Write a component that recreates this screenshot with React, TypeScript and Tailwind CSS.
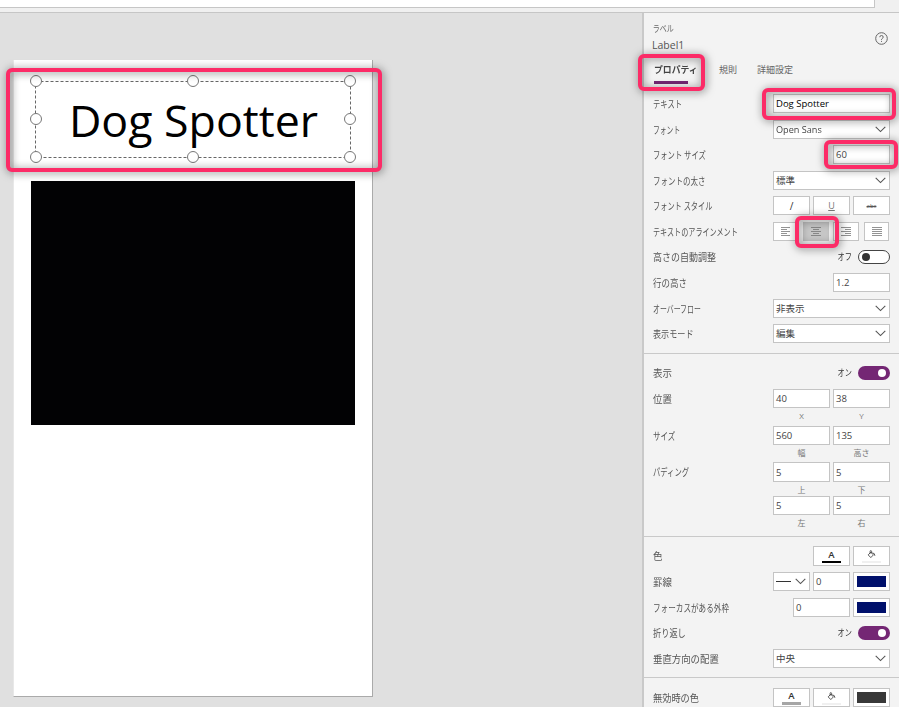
import React from "react";

const JP = "font-['Open_Sans','Noto_Sans_CJK_JP',sans-serif]";
const BOX = "box-border border border-[#c4c4c4] bg-white";

function Label({ text, scale }: { text: string; scale: string }) {
  return (
    <span className={`block h-[19px] origin-left whitespace-nowrap pt-px text-[10px] leading-[19px] text-[#555] ${scale}`}>
      {text}
    </span>
  );
}

function Row({ label, scale, h, children }: { label: string; scale: string; h: string; children: React.ReactNode }) {
  return (
    <div className={`flex items-start justify-between pr-[9px] pl-[9px] ${h}`}>
      <div className="w-0"><Label text={label} scale={scale} /></div>
      <div className="flex items-start">{children}</div>
    </div>
  );
}

function Chevron() {
  return (
    <svg className="h-[7px] w-[11px] shrink-0" viewBox="0 0 11 7" fill="none" stroke="#555" strokeWidth="1.1">
      <path d="M0.7 0.9 L5.5 5.6 L10.3 0.9" />
    </svg>
  );
}

function Select({ value, scale = "" }: { value: string; scale?: string }) {
  return (
    <div className={`${BOX} flex h-[19px] w-[117px] items-center justify-between pr-[3px] pl-[2px]`}>
      <span className={`origin-left text-[9.5px] leading-[17px] text-[#444] ${scale}`}>{value}</span>
      <Chevron />
    </div>
  );
}

function Input({ value, w = "w-[57px]", h = "h-[19px]", color = "text-[#444]" }: { value: string; w?: string; h?: string; color?: string }) {
  return (
    <div className={`${BOX} ${w} ${h} ${color} flex items-center whitespace-nowrap pl-[2px] text-[9.5px] leading-[17px]`}>{value}</div>
  );
}

function Pair({ a, b, la, lb, h }: { a: string; b: string; la: string; lb: string; h?: string }) {
  return (
    <div className="flex gap-[3px]">
      {[[a, la], [b, lb]].map(([v, l], i) => (
        <div key={i} className="flex flex-col items-center">
          <Input value={v} h={h} />
          <span className="mt-px h-3 text-[8px] leading-[13px] text-[#777]">{l}</span>
        </div>
      ))}
    </div>
  );
}

function Toggle({ on }: { on: boolean }) {
  return (
    <div className="mt-[3px] flex h-[14px] items-center">
      <span className="mr-[6px] origin-right scale-x-[.8] text-[9px] leading-[14px] text-[#333]">{on ? "オン" : "オフ"}</span>
      {on ? (
        <div className="flex h-[14px] w-8 items-center justify-end rounded-full bg-[#742774] pr-[4px]">
          <div className="size-[8px] rounded-full bg-white" />
        </div>
      ) : (
        <div className="flex h-[14px] w-8 items-center rounded-full border border-[#444] bg-white pl-[3px]">
          <div className="size-[8px] rounded-full bg-[#333]" />
        </div>
      )}
    </div>
  );
}

function AlignIcon({ kind }: { kind: "left" | "center" | "right" | "justify" }) {
  const d = {
    left: "M0 .5H9M0 2.5H6M0 4.5H9M0 6.5H6M0 8.5H9",
    center: "M0 .5H10M2 2.5H8M0 4.5H10M2 6.5H8M0 8.5H10",
    right: "M0 .5H10M4 2.5H10M0 4.5H10M4 6.5H10M0 8.5H10",
    justify: "M0 .5H10M0 2.5H10M0 4.5H10M0 6.5H10M0 8.5H10",
  }[kind];
  return (
    <svg className="mb-px h-[9px] w-[10px]" viewBox="0 0 10 9" stroke="#777" strokeWidth=".8">
      <path d={d} />
    </svg>
  );
}

function Button({ children, w = "w-[37px]", h = "h-[19px]", bg = "bg-white" }: { children: React.ReactNode; w?: string; h?: string; bg?: string }) {
  return <div className={`box-border flex items-center justify-center border border-[#c4c4c4] ${bg} ${w} ${h}`}>{children}</div>;
}

function FontColor({ bar, h }: { bar: string; h?: string }) {
  return (
    <Button h={h}>
      <div className="flex flex-col items-center">
        <span className="h-[11px] text-[9.5px] leading-[10px] font-semibold text-[#333]">A</span>
        <div className={`w-[19px] ${bar}`} />
      </div>
    </Button>
  );
}

function Fill({ h }: { h?: string }) {
  return (
    <Button h={h}>
      <div className="flex flex-col items-center">
        <svg className="mt-px h-[9px] w-[9px]" viewBox="0 0 9 9" fill="none" stroke="#333" strokeWidth=".8">
          <path d="M3.8 2.2 L1.2 4.9 L3.8 7.6 L6.4 4.9 Z M3.1 3.7V1.4Q3.1 .6 3.8 .6T4.6 1.4V3.2 M5.4 2.9Q7.9 3 7.9 5.8" />
        </svg>
        <div className="mt-[2px] h-[2px] w-[19px] bg-[#f0f0f0]" />
      </div>
    </Button>
  );
}

function Swatch({ color }: { color: string }) {
  return <Button><div className={`h-[11px] w-[29px] ${color}`} /></Button>;
}

function Highlight({ place }: { place: string }) {
  return (
    <div className={`pointer-events-none absolute rounded-[6px] border-4 border-[#fc2b67] drop-shadow-[1px_1px_4px_rgba(0,0,0,0.55)] ${place}`} />
  );
}

const HANDLES = [
  "-left-[5px] -top-[6px]", "left-[152px] -top-[6px]", "left-[309px] -top-[6px]",
  "-left-[5px] top-[32px]", "left-[309px] top-[32px]",
  "-left-[5px] top-[70px]", "left-[152px] top-[70px]", "left-[309px] top-[70px]",
];

export default function App() {
  return (
    <div className={`relative flex h-[707px] w-[899px] flex-col overflow-hidden bg-[#f0f0f0] ${JP}`}>
      <div className="h-[8px] w-[875px] shrink-0 border-r border-b border-[#c6c6c6] bg-white" />
      <div className="h-[5px] shrink-0 border-b border-[#c6c6c6]" />
      <div className="flex min-h-0 flex-1">
        <main className="w-[642px] shrink-0 bg-[#e0e0e0] pt-[47px] pl-[13px]">
          <div className="flex h-[637px] w-[360px] flex-col border-r border-b border-l border-r-[#aaa] border-b-[#aaa] border-l-[#e8e8e8] bg-white">
            <div className="relative mt-[21px] ml-[21px] flex h-[77px] w-[316px] items-center justify-center">
              <svg className="absolute inset-0 h-[77px] w-[316px]" fill="none" stroke="#666" strokeDasharray="3 2">
                <rect x=".5" y=".5" width="315" height="76" />
              </svg>
              <span className="relative pl-px text-[44.7px] leading-[54px] whitespace-nowrap text-black">Dog Spotter</span>
              {HANDLES.map((p) => (
                <div key={p} className={`absolute size-[12px] rounded-full border border-[#777] bg-white ${p}`} />
              ))}
            </div>
            <div className="mt-[23px] ml-[17px] h-[244px] w-[324px] bg-[#020204]" />
          </div>
        </main>
        <aside className="w-[257px] shrink-0 border-l-2 border-[#c9c9c9] bg-[#f3f3f3]">
          <header className="flex h-[47px] items-start justify-between pr-[11px] pl-[8px]">
            <div className="pt-[9px]">
              <div className="h-3 origin-left scale-x-[.78] pl-px text-[9px] leading-[13px] text-[#666]">ラベル</div>
              <div className="mt-[3px] h-4 text-[10.5px] leading-4 text-[#555]">Label1</div>
            </div>
            <svg className="mt-[19px] size-[13px]" viewBox="0 0 13 13" fill="none" stroke="#666">
              <circle cx="6.5" cy="6.5" r="5.8" />
              <path d="M4.8 5.2Q4.8 3.5 6.5 3.5T8.2 5.1Q8.2 6 7.2 6.6T6.5 8M6.5 8.9V9.9" />
            </svg>
          </header>
          <nav className="flex h-[34px] pl-[10px] text-[9px] leading-[18px] text-[#666]">
            <div className="w-[65px]">
              <div className="mt-px w-max origin-left scale-x-[.98] font-bold text-[#444]">プロパティ</div>
              <div className="mt-[2px] h-[3px] w-[34px] bg-[#742774]" />
            </div>
            <div className="mt-px w-[38px]">規則</div>
            <div className="mt-px">詳細設定</div>
          </nav>
          <section className="h-[259px]">
            <Row label="テキスト" scale="scale-x-[.73]" h="h-[26px]"><Input value="Dog Spotter" w="w-[117px]" color="text-black" /></Row>
            <Row label="フォント" scale="scale-x-[.68]" h="h-[25px]"><Select value="Open Sans" scale="scale-x-[.96]" /></Row>
            <Row label="フォント サイズ" scale="scale-x-[.73]" h="h-[26px]"><Input value="60" /></Row>
            <Row label="フォントの太さ" scale="scale-x-[.75]" h="h-[25px]"><Select value="標準" /></Row>
            <Row label="フォント スタイル" scale="scale-x-[.72]" h="h-[26px]">
              <div className="flex gap-[3px]">
                <Button><span className="text-[10px] leading-3 text-[#333]">/</span></Button>
                <Button><span className="text-[9px] leading-3 text-[#777] underline">U</span></Button>
                <Button><span className="text-[6px] leading-3 text-[#555] line-through">abc</span></Button>
              </div>
            </Row>
            <Row label="テキストのアラインメント" scale="scale-x-[.71]" h="h-[25px]">
              <div className="flex pr-px">
                <Button w="w-[25px]"><AlignIcon kind="left" /></Button>
                <div className="ml-[5px]"><Button w="w-[26px]" bg="bg-[#c6c6c6]"><AlignIcon kind="center" /></Button></div>
                <div className="ml-[4px]"><Button w="w-[26px]"><AlignIcon kind="right" /></Button></div>
                <div className="ml-[5px]"><Button w="w-[25px]"><AlignIcon kind="justify" /></Button></div>
              </div>
            </Row>
            <Row label="高さの自動調整" scale="scale-x-[.9]" h="h-[26px]"><Toggle on={false} /></Row>
            <Row label="行の高さ" scale="scale-x-[.85]" h="h-[26px]"><Input value="1.2" /></Row>
            <Row label="オーバーフロー" scale="scale-x-[.69]" h="h-[25px]"><Select value="非表示" /></Row>
            <Row label="表示モード" scale="scale-x-[.81]" h="h-[29px]"><Select value="編集" /></Row>
          </section>
          <section className="h-[183px] border-t border-[#c9c9c9] pt-[9px]">
            <Row label="表示" scale="scale-x-[.95]" h="h-[26px]"><Toggle on /></Row>
            <Row label="位置" scale="scale-x-[.95]" h="h-[37px]"><Pair a="40" b="38" la="X" lb="Y" /></Row>
            <Row label="サイズ" scale="scale-x-[.75]" h="h-[36px]"><Pair a="560" b="135" la="幅" lb="高さ" /></Row>
            <Row label="パディング" scale="scale-x-[.73]" h="h-[34px]"><Pair a="5" b="5" la="上" lb="下" h="h-[20px]" /></Row>
            <div className="flex justify-end pr-[9px]"><Pair a="5" b="5" la="左" lb="右" /></div>
          </section>
          <section className="h-[141px] border-t border-[#c9c9c9] pt-[9px]">
            <Row label="色" scale="scale-x-[.95]" h="h-[26px]">
              <div className="flex gap-[3px]"><FontColor bar="h-[2px] bg-black" h="h-[20px]" /><Fill h="h-[20px]" /></div>
            </Row>
            <Row label="罫線" scale="scale-x-[.95]" h="h-[26px]">
              <div className="flex gap-[3px]">
                <div className={`${BOX} flex h-[19px] w-[37px] items-center justify-between pr-[3px] pl-[2px]`}>
                  <div className="h-px w-[15px] bg-[#333]" /><Chevron />
                </div>
                <Input value="0" w="w-[37px]" /><Swatch color="bg-[#00106b]" />
              </div>
            </Row>
            <Row label="フォーカスがある外枠" scale="scale-x-[.76]" h="h-[25px]">
              <div className="flex gap-[3px]"><Input value="0" /><Swatch color="bg-[#00106b]" /></div>
            </Row>
            <Row label="折り返し" scale="scale-x-[.82]" h="h-[26px]"><Toggle on /></Row>
            <Row label="垂直方向の配置" scale="scale-x-[.94]" h="h-[28px]"><Select value="中央" /></Row>
          </section>
          <section className="border-t border-[#c9c9c9] pt-[10px]">
            <Row label="無効時の色" scale="scale-x-[.92]" h="h-[19px]">
              <div className="flex gap-[3px]"><FontColor bar="h-[3px] bg-[#a6a6a6]" /><Fill /><Swatch color="bg-[#383838]" /></div>
            </Row>
          </section>
        </aside>
      </div>
      <Highlight place="left-[6px] top-[68px] h-[104px] w-[376px]" />
      <Highlight place="left-[638px] top-[54px] h-[37px] w-[67px]" />
      <Highlight place="left-[762px] top-[88px] h-[32px] w-[134px]" />
      <Highlight place="left-[824px] top-[140px] h-[29px] w-[74px]" />
      <Highlight place="left-[795px] top-[216px] h-[32px] w-[44px]" />
    </div>
  );
}
